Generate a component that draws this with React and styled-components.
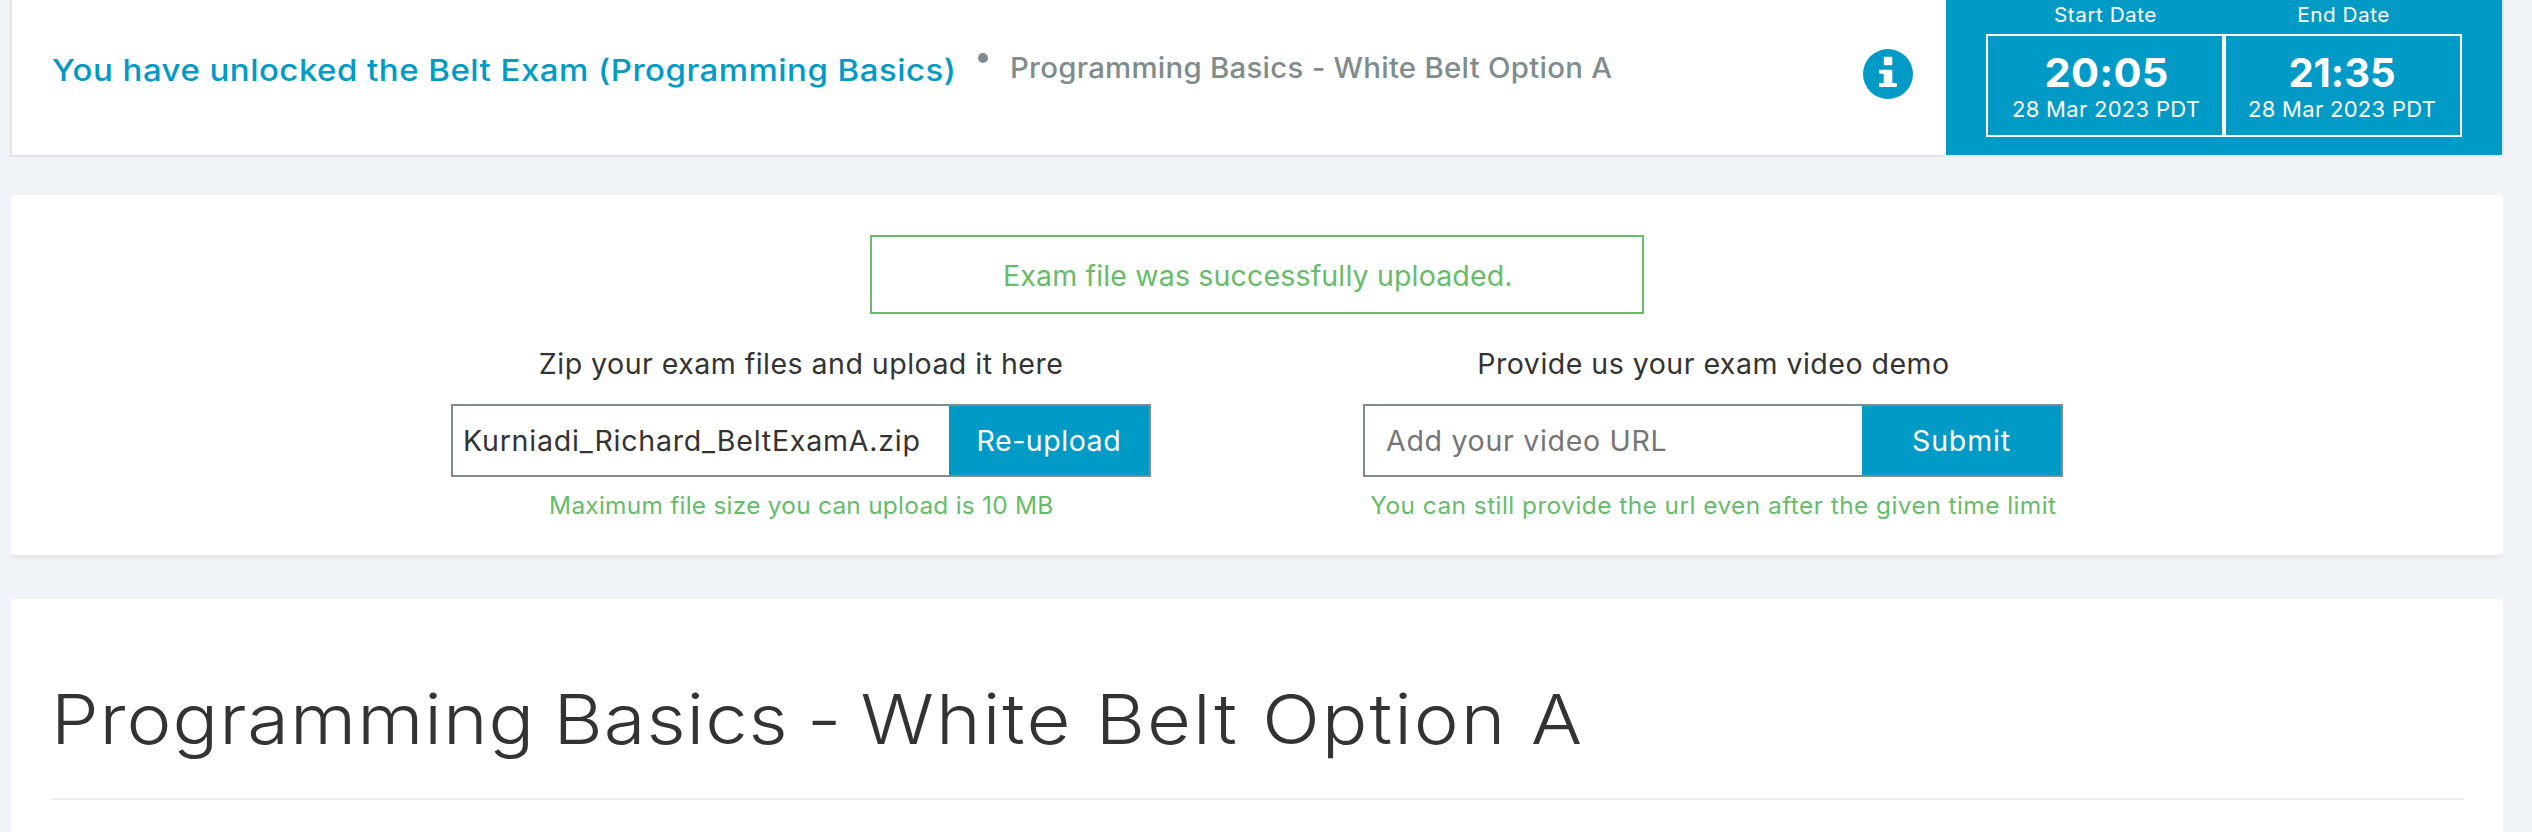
import React from "react";
import styled, { createGlobalStyle } from "styled-components";

const blue = "#009ac7";
const green = "#66bc6a";
const gray = "#7f8c8d";
const ink = "#333333";

const GlobalStyle = createGlobalStyle`
  * { box-sizing: border-box; }
  html, body { margin: 0; background: #f0f3f8; overflow: hidden; }
  body {
    font-family: Inter, "Open Sans", sans-serif;
    font-feature-settings: "calt" 0;
    color: ${ink};
  }
`;

const Page = styled.main`
  height: 832px;
  overflow: hidden;
`;

/* Single-line text; the negative margin drops the tracking after the last letter,
   and $stretch widens the letterforms about the $origin edge. */
const Text = styled.span`
  display: block;
  white-space: nowrap;
  font-size: ${(p) => p.$size}px;
  line-height: ${(p) => p.$line}px;
  font-weight: ${(p) => p.$weight || 400};
  letter-spacing: ${(p) => p.$track || 0}px;
  margin-right: ${(p) => -(p.$track || 0)}px;
  color: ${(p) => p.$color || "inherit"};
  transform: ${(p) => (p.$stretch ? `scaleX(${p.$stretch})` : "none")};
  transform-origin: ${(p) => p.$origin || "center"};
`;

const Header = styled.header`
  display: flex;
  width: 2494px;
  height: 157px;
  margin-left: 10px;
  background: #fff;
  border: solid #e0e6e6;
  border-width: 0 2px 2px;
`;

const HeaderInfo = styled.div`
  flex: 1;
  display: flex;
  align-items: flex-start;
  padding: 48px 33px 0 40px;
`;

const Unlocked = styled.div`
  width: 903px;
  padding-top: 2px;
`;

const Bullet = styled.i`
  width: 10px;
  height: 10px;
  margin: 5px 22px 0 23px;
  border-radius: 50%;
  background: ${gray};
`;

const InfoIcon = styled.svg`
  width: 50px;
  height: 50px;
  margin: 1px 0 0 auto;
  fill: ${blue};
`;

const Schedule = styled.div`
  display: flex;
  width: 556px;
  padding: 5px 40px 0;
  background: ${blue};
  color: #fff;
`;

const DateColumn = styled.div`
  width: 238px;
  display: flex;
  flex-direction: column;
  align-items: center;
`;

const DateBox = styled.div`
  width: 100%;
  height: 103px;
  margin-top: 9px;
  padding-top: 17px;
  padding-left: ${(p) => (p.$side === "left" ? 2 : 0)}px;
  padding-right: ${(p) => (p.$side === "right" ? 2 : 0)}px;
  border: 2px solid #fff;
  display: flex;
  flex-direction: column;
  align-items: center;
`;

const Card = styled.section`
  width: 2492px;
  margin-left: 11px;
  background: #fff;
`;

const UploadCard = styled(Card)`
  height: 360px;
  margin-top: 38px;
  padding-top: 40px;
  border-radius: 4px;
  box-shadow: 0 4px 0 #eaeaea;
`;

const Alert = styled.div`
  display: flex;
  justify-content: center;
  width: 774px;
  height: 79px;
  margin: 0 auto;
  padding: 19px 0 0 1px;
  border: 2px solid ${green};
`;

const Forms = styled.div`
  display: flex;
  justify-content: center;
  gap: 212px;
  margin-top: 30px;
`;

const Field = styled.div`
  width: 700px;
  display: flex;
  flex-direction: column;
  align-items: center;
`;

const InputGroup = styled.div`
  display: flex;
  width: 100%;
  height: 73px;
  margin: 20px 0 9px;
  border: 2px solid ${gray};
`;

const Value = styled.div`
  flex: 1;
  padding: 15px 0 0 ${(p) => p.$inset}px;
`;

const Action = styled.button`
  display: flex;
  justify-content: center;
  width: ${(p) => p.$width}px;
  padding: 15px 0 0;
  border: 0;
  background: ${blue};
  color: #fff;
  font-family: inherit;
  font-feature-settings: inherit;
`;

const ExamCard = styled(Card)`
  height: 233px;
  margin-top: 44px;
  padding: 80px 40px 0;
`;

const Heading = styled.h1`
  margin: 0;
  padding: 0 0 39px;
  border-bottom: 2px solid #eeeeee;
`;

const HeadingPart = styled.span`
  letter-spacing: ${(p) => p.$track}px;
  word-spacing: ${(p) => p.$gap}px;
`;

function InfoCircle() {
  return (
    <InfoIcon viewBox="0 0 150 150" aria-label="Information">
      <circle cx="75" cy="75" r="75" />
      <rect x="62.5" y="23.5" width="25.5" height="25" rx="3" fill="#fff" />
      <path
        d="M51 62H85Q88 62 88 65V102H99Q102 102 102 105V111Q102 114 99 114H51Q48 114 48 111V105Q48 102 51 102H62V74H51Q48 74 48 71V65Q48 62 51 62Z"
        fill="#fff"
      />
    </InfoIcon>
  );
}

function DateCell({ side, label, time, date, timeTrack, timeStretch }) {
  return (
    <DateColumn>
      <Text $size={20} $line={20} $stretch={1.04} $track={0.46}>{label}</Text>
      <DateBox $side={side}>
        <Text $size={40} $line={40} $weight={700} $track={timeTrack} $stretch={timeStretch}>{time}</Text>
        <Text $size={22} $line={32} $track={0.29}>{date}</Text>
      </DateBox>
    </DateColumn>
  );
}

function UploadField({ label, value, inset, valueColor, action, actionWidth, help, tracks }) {
  return (
    <Field>
      <Text $size={28} $line={40} $stretch={1.02} $track={tracks[0]}>{label}</Text>
      <InputGroup>
        <Value $inset={inset}>
          <Text $size={28} $line={40} $stretch={1.02} $origin="left" $track={tracks[1]} $color={valueColor}>
            {value}
          </Text>
        </Value>
        <Action type="button" $width={actionWidth}>
          <Text $size={28} $line={40} $stretch={1.02} $track={tracks[2]}>{action}</Text>
        </Action>
      </InputGroup>
      <Text $size={24} $line={40} $stretch={1.02} $track={tracks[3]} $color={green}>{help}</Text>
    </Field>
  );
}

export default function App() {
  return (
    <Page>
      <GlobalStyle />
      <Header>
        <HeaderInfo>
          <Unlocked>
            <Text $size={30} $line={40} $weight={500} $stretch={1.1} $origin="left" $track={0.43} $color={blue}>
              You have unlocked the Belt Exam (Programming Basics)
            </Text>
          </Unlocked>
          <Bullet />
          <Text $size={28} $line={40} $weight={500} $stretch={1.05} $origin="left" $track={0.24} $color={gray}>
            Programming Basics - White Belt Option A
          </Text>
          <InfoCircle />
        </HeaderInfo>
        <Schedule>
          <DateCell side="left" label="Start Date" time="20:05" date="28 Mar 2023 PDT" timeTrack={0.2} timeStretch={1.04} />
          <DateCell side="right" label="End Date" time="21:35" date="28 Mar 2023 PDT" timeTrack={0} timeStretch={1} />
        </Schedule>
      </Header>

      <UploadCard>
        <Alert>
          <Text $size={28} $line={40} $stretch={1.02} $track={0.13} $color={green}>
            Exam file was successfully uploaded.
          </Text>
        </Alert>
        <Forms>
          <UploadField
            label="Zip your exam files and upload it here"
            value="Kurniadi_Richard_BeltExamA.zip"
            inset={9.5}
            valueColor={ink}
            action="Re-upload"
            actionWidth={200}
            help="Maximum file size you can upload is 10 MB"
            tracks={[0.45, 0.75, 0.5, 0.22]}
          />
          <UploadField
            label="Provide us your exam video demo"
            value="Add your video URL"
            inset={21}
            valueColor="#757575"
            action="Submit"
            actionWidth={199}
            help="You can still provide the url even after the given time limit"
            tracks={[0.46, 0.67, 0.8, 0.42]}
          />
        </Forms>
      </UploadCard>

      <ExamCard>
        <Heading>
          <Text $size={69} $line={80} $weight={350} $stretch={1.1} $origin="left">
            <HeadingPart $track={0.85} $gap={-3.6}>Programming Basics - </HeadingPart>
            <HeadingPart $track={1.83} $gap={0}>White Belt Option A</HeadingPart>
          </Text>
        </Heading>
      </ExamCard>
    </Page>
  );
}
